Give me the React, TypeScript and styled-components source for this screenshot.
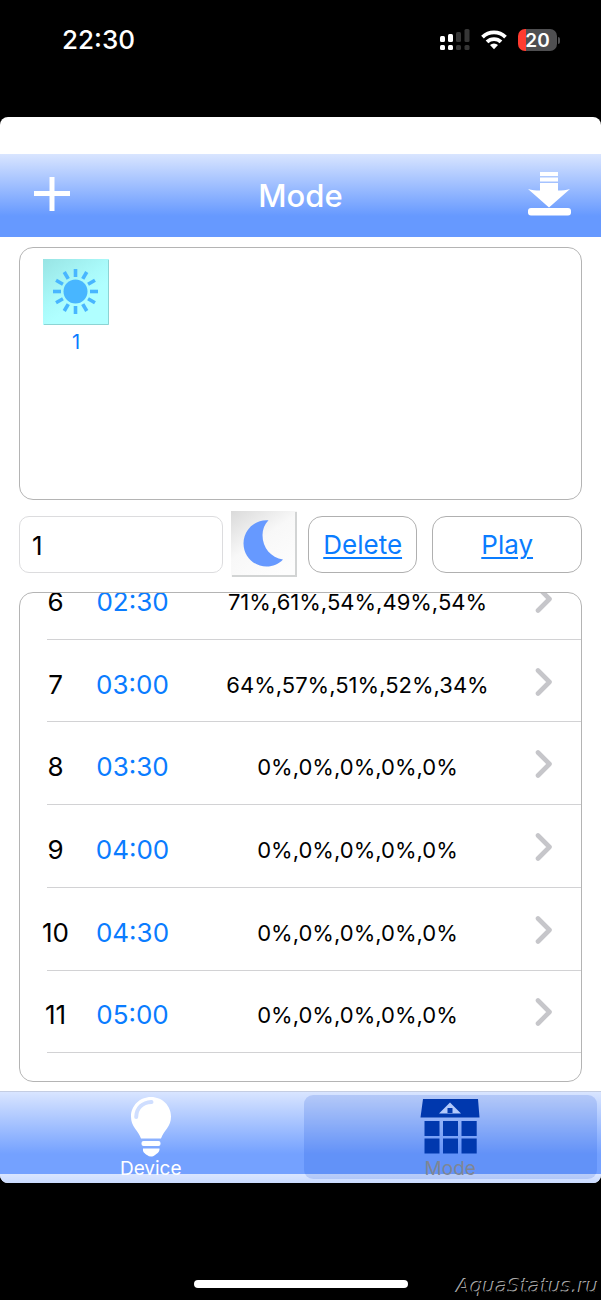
import React, { useState } from "react";
import styled, { createGlobalStyle } from "styled-components";

const BLUE = "#0a7cff";
const BAR_GRADIENT = "linear-gradient(#d9e5ff 0, #6699ff 62px, #6699ff 100%)";

const GlobalStyle = createGlobalStyle`
  *, *::before, *::after { box-sizing: border-box; }
  body { margin: 0; background: #000; }
  button, input { font: inherit; color: inherit; margin: 0; padding: 0; }
  button { background: none; border: 0; cursor: pointer; }
  svg { display: block; }
`;

const Page = styled.div`
  display: flex;
  flex-direction: column;
  height: 100vh;
  min-height: 900px;
  background: #000;
  font-family: Inter, "Liberation Sans", sans-serif;
  font-size: 26px;
  line-height: 32px;
`;

const StatusBar = styled.header`
  display: flex;
  justify-content: space-between;
  align-items: flex-start;
  flex: none;
  height: 117px;
  padding: 24px 41px 0 62px;
  color: #fff;
`;

const Clock = styled.time`
  font-weight: 500;
`;

const StatusIcons = styled.div`
  display: flex;
  align-items: center;
  gap: 11px;
  height: 32px;
`;

const Battery = styled.div`
  display: flex;
  align-items: center;
  gap: 1px;
`;

const BatteryBody = styled.div`
  width: 39px;
  height: 22px;
  border-radius: 7px;
  background: linear-gradient(90deg, #ff3b30 8px, #4f4f51 8px);
  font-size: 19px;
  font-weight: 600;
  line-height: 24px;
  text-align: center;
`;

const BatteryTip = styled.div`
  width: 2px;
  height: 7px;
  border-radius: 0 2px 2px 0;
  background: #4f4f51;
`;

const Sheet = styled.main`
  display: flex;
  flex-direction: column;
  flex: 1;
  min-height: 0;
  padding-top: 37px;
  border-radius: 8px;
  overflow: hidden;
  background: #fff;
`;

const TitleBar = styled.div`
  display: grid;
  grid-template-columns: 44px 1fr 44px;
  align-items: center;
  flex: none;
  height: 83px;
  padding: 0 30px;
  background: ${BAR_GRADIENT};
  color: #fff;
`;

const Title = styled.h1`
  margin: 0;
  font-size: 31px;
  line-height: 40px;
  font-weight: 500;
  text-align: center;
`;

const IconButton = styled.button`
  display: flex;
  justify-content: center;
`;

const TitleButton = styled(IconButton)`
  padding-bottom: 4px;
`;

const Content = styled.div`
  display: flex;
  flex-direction: column;
  flex: 1;
  min-height: 0;
  padding: 10px 19px 9px;
`;

const Panel = styled.section`
  border: 1px solid #b4b4b4;
  border-radius: 14px;
  overflow: hidden;
`;

const ModePanel = styled(Panel)`
  flex: none;
  height: 253px;
  padding: 11px 23px;
`;

const ModeItem = styled.button`
  display: flex;
  flex-direction: column;
  align-items: center;
  gap: 5px;
  color: ${BLUE};
  font-size: 20px;
  line-height: 24px;
`;

const Controls = styled.div`
  display: flex;
  align-items: center;
  flex: none;
  gap: 11px;
  height: 66px;
  margin: 11px 0 15px;
`;

const ControlGroup = styled.div<{ $gap: number; $share: number }>`
  display: flex;
  align-items: center;
  gap: ${(p) => p.$gap}px;
  flex: ${(p) => p.$share} 1 0;
  min-width: 0;
`;

const NameInput = styled.input`
  flex: 1;
  min-width: 0;
  height: 57px;
  padding: 2px 12px 0;
  border: 1px solid #dcdcde;
  border-radius: 10px;
  background: #fff;
  color: #000;
  outline: none;
`;

const ActionButton = styled.button<{ $share: number }>`
  flex: ${(p) => p.$share} 1 0;
  height: 57px;
  padding-top: 2px;
  border: 1px solid #b0b0b0;
  border-radius: 14px;
  color: ${BLUE};
  text-decoration: underline;
  text-decoration-thickness: 2px;
  text-underline-offset: 3px;
`;

const SchedulePanel = styled(Panel)`
  flex: 1;
  min-height: 0;
`;

const Schedule = styled.table`
  width: 100%;
  height: 579px;
  margin-top: -36px;
  border-collapse: collapse;
  table-layout: fixed;
`;

const Row = styled.tr`
  background: linear-gradient(#d2d2d4, #d2d2d4) right bottom / calc(100% - 27px) 1px no-repeat;
`;

const Cell = styled.td`
  padding: 7px 0 0;
  text-align: center;
`;

const NumberCell = styled(Cell)`
  width: 71px;
`;

const TimeCell = styled(Cell)`
  width: 118px;
  padding-right: 35px;
  color: ${BLUE};
`;

const LevelsCell = styled(Cell)`
  font-size: 22px;
  white-space: nowrap;
`;

const OpenCell = styled(Cell)`
  width: 75px;
  padding: 1px 0 0;
`;

const OpenButton = styled(IconButton)`
  width: 100%;
`;

const TabBar = styled.nav`
  display: grid;
  grid-template-columns: 1fr 1fr;
  gap: 6px;
  flex: none;
  height: 92px;
  padding: 3px 4px 4px;
  border-top: 1px solid #c4cde2;
  background: linear-gradient(#d9e5ff 0, #74a1ff 62px, #74a1ff 100%) 0 0 / 100% 82px;
`;

const Tab = styled.button<{ $active: boolean }>`
  display: flex;
  flex-direction: column;
  align-items: center;
  gap: 2px;
  padding-top: 2px;
  border-radius: 9px;
  background: ${(p) => (p.$active ? "rgba(0, 60, 210, 0.15)" : "none")};
  color: ${(p) => (p.$active ? "#7f8694" : "#fff")};
  font-size: 19px;
  line-height: 20px;
`;

const HomeArea = styled.footer`
  display: grid;
  grid-template-columns: 1fr 214px 1fr;
  align-items: end;
  flex: none;
  height: 117px;
`;

const HomeIndicator = styled.div`
  grid-column: 2;
  height: 8px;
  margin-bottom: 12px;
  border-radius: 4px;
  background: #fff;
`;

const Watermark = styled.span`
  justify-self: end;
  padding-right: 2px;
  color: #000;
  font-family: "DejaVu Sans", sans-serif;
  font-size: 20px;
  font-style: italic;
  line-height: 28px;
  text-shadow: -1px -1px 0 #a8a8a8;
`;

const SignalIcon = () => (
  <svg width="30" height="22" viewBox="0 0 30 22" aria-hidden="true">
    <g fill="#fff">
      <rect x="0" y="7" width="5" height="6" rx="1.5" />
      <rect x="8" y="5" width="5" height="8" rx="1.5" />
      <rect x="0" y="16" width="5" height="5" rx="1.5" />
      <rect x="8" y="16" width="5" height="5" rx="1.5" />
    </g>
    <g fill="#363636">
      <rect x="16" y="3" width="5" height="10" rx="1.5" />
      <rect x="24.5" y="0" width="5" height="13" rx="1.5" />
      <rect x="16" y="16" width="5" height="5" rx="1.5" />
      <rect x="24.5" y="16" width="5" height="5" rx="1.5" />
    </g>
  </svg>
);

const WifiIcon = () => (
  <svg width="26" height="20" viewBox="0 0 26 20" aria-hidden="true">
    <g fill="none" stroke="#fff" strokeWidth="3.8">
      <path d="M1.500 7.200a16.300 16.300 0 0 1 23 0" />
      <path d="M6 11.900a10 10 0 0 1 14 0" />
    </g>
    <path d="M13 19.200l-4-4.100a5.700 5.700 0 0 1 8 0z" fill="#fff" />
  </svg>
);

const PlusIcon = () => (
  <svg width="36" height="34" viewBox="0 0 36 34" aria-hidden="true">
    <path d="M0 16.500h36M18 0v34" stroke="#fff" strokeWidth="5" />
  </svg>
);

const DownloadIcon = () => (
  <svg width="44" height="44" viewBox="0 0 44 44" aria-hidden="true">
    <g fill="#fff">
      <path d="M13 0h18v4H13zM13 5.500h18v4H13zM13 11h18v7.500c4 0 8-.3 12-1.500L22 35.500 1 17c4 1.200 8 1.500 12 1.500z" />
      <rect x="1" y="36" width="43" height="7.500" rx="3" />
    </g>
  </svg>
);

const RAYS = Array.from({ length: 12 }, (_, i) => i * 30);

const SunTile = () => (
  <svg width="66" height="66" viewBox="0 0 66 66" aria-hidden="true">
    <defs>
      <linearGradient id="sunTile" x1="0" y1="0" x2="0.7" y2="1">
        <stop offset="0" stopColor="#98e4e4" />
        <stop offset="0.5" stopColor="#aafafa" />
        <stop offset="0.7" stopColor="#b0ffff" />
      </linearGradient>
    </defs>
    <rect width="66" height="66" fill="url(#sunTile)" />
    <path d="M1 65.500h64.500V1" fill="none" stroke="#8cd4d4" />
    <circle cx="32.500" cy="32.500" r="12" fill="#48b6ff" />
    {RAYS.map((angle) => (
      <rect
        key={angle}
        x="30.700"
        y="10"
        width="3.600"
        height="8"
        fill="#48b6ff"
        transform={`rotate(${angle} 32.500 32.500)`}
      />
    ))}
  </svg>
);

const MoonTile = () => (
  <svg width="66" height="66" viewBox="0 0 66 66" aria-hidden="true">
    <defs>
      <linearGradient id="moonTile" x1="0" y1="0" x2="0.7" y2="1">
        <stop offset="0" stopColor="#dadada" />
        <stop offset="0.5" stopColor="#f8f8f8" />
        <stop offset="1" stopColor="#fdfdfd" />
      </linearGradient>
    </defs>
    <rect width="66" height="66" fill="url(#moonTile)" />
    <path d="M1 65h64V1" fill="none" stroke="#d2d4d4" strokeWidth="2" />
    <path
      d="M37.500 9.300C24 8 12.500 19 12.500 32.500 12.500 45.500 23 55.500 35.500 55.500c6.500 0 12-2.300 16.500-7C40 46.500 31.500 37 31.500 24c0-5.500 2-10.500 6-14.700z"
      fill="#6699ff"
    />
  </svg>
);

const ChevronIcon = () => (
  <svg width="18" height="30" viewBox="0 0 18 30" aria-hidden="true">
    <path
      d="M3 3.500L14.500 15 3 26.500"
      fill="none"
      stroke="#c6c6ca"
      strokeWidth="4.600"
      strokeLinecap="round"
      strokeLinejoin="round"
    />
  </svg>
);

const BulbIcon = () => (
  <svg width="60" height="60" viewBox="0 0 60 60" aria-hidden="true">
    <g fill="#fff">
      <path d="M30 0c11.300 0 20 8.800 20 19.500 0 5-1.500 8.500-4 12-2.300 3.300-4.300 5.500-6 10H20c-1.700-4.500-3.700-6.700-6-10-2.500-3.500-4-7-4-12C10 8.800 18.700 0 30 0z" />
      <rect x="20.500" y="44" width="19" height="5" rx="2" />
      <path d="M22 51.500h16.500c.3 3.500-2.300 5-4.500 6.500-2.500 2-5.500 2-8 0-2.500-1.700-4.500-3-4-6.500z" />
    </g>
    <path d="M15.200 20C15.500 11 21.500 5.500 30.500 5" fill="none" stroke="#cfdeff" strokeWidth="4" strokeLinecap="round" />
  </svg>
);

const HouseIcon = () => (
  <svg width="60" height="60" viewBox="0 0 60 60" aria-hidden="true">
    <path
      d="M3 2h55l1.500 18.500H.5zM4.500 24h15v15h-15zM23 24h15v15H23zM41.500 24h15.200v15H41.500zM4.500 41.500h15v15h-15zM23 41.500h15v15H23zM41.500 41.500h15.200v15H41.500z"
      fill="#0038ae"
    />
    <path d="M30 5.500L41 16.500H19z" fill="#b3c9fb" />
    <rect x="27.500" y="11" width="5" height="5" fill="#0038ae" />
  </svg>
);

const ENTRIES = [
  { id: 6, time: "02:30", levels: [71, 61, 54, 49, 54] },
  { id: 7, time: "03:00", levels: [64, 57, 51, 52, 34] },
  { id: 8, time: "03:30", levels: [0, 0, 0, 0, 0] },
  { id: 9, time: "04:00", levels: [0, 0, 0, 0, 0] },
  { id: 10, time: "04:30", levels: [0, 0, 0, 0, 0] },
  { id: 11, time: "05:00", levels: [0, 0, 0, 0, 0] },
  { id: 12, time: "05:30", levels: [0, 0, 0, 0, 0] },
];

export default function App() {
  const [name, setName] = useState("1");
  const [tab, setTab] = useState<"device" | "mode">("mode");

  return (
    <>
      <GlobalStyle />
      <Page>
        <StatusBar>
          <Clock>22:30</Clock>
          <StatusIcons>
            <SignalIcon />
            <WifiIcon />
            <Battery>
              <BatteryBody>20</BatteryBody>
              <BatteryTip />
            </Battery>
          </StatusIcons>
        </StatusBar>

        <Sheet>
          <TitleBar>
            <TitleButton type="button" aria-label="Add">
              <PlusIcon />
            </TitleButton>
            <Title>Mode</Title>
            <TitleButton type="button" aria-label="Download">
              <DownloadIcon />
            </TitleButton>
          </TitleBar>

          <Content>
            <ModePanel>
              <ModeItem type="button">
                <SunTile />
                1
              </ModeItem>
            </ModePanel>

            <Controls>
              <ControlGroup $gap={8} $share={278}>
                <NameInput aria-label="Name" value={name} onChange={(e) => setName(e.target.value)} />
                <IconButton type="button" aria-label="Icon">
                  <MoonTile />
                </IconButton>
              </ControlGroup>
              <ControlGroup $gap={15} $share={274}>
                <ActionButton type="button" $share={109}>
                  Delete
                </ActionButton>
                <ActionButton type="button" $share={150}>
                  Play
                </ActionButton>
              </ControlGroup>
            </Controls>

            <SchedulePanel>
              <Schedule>
                <tbody>
                  {ENTRIES.map((entry) => (
                    <Row key={entry.id}>
                      <NumberCell>{entry.id}</NumberCell>
                      <TimeCell>{entry.time}</TimeCell>
                      <LevelsCell>{entry.levels.map((level) => `${level}%`).join(",")}</LevelsCell>
                      <OpenCell>
                        <OpenButton type="button" aria-label={`Open ${entry.time}`}>
                          <ChevronIcon />
                        </OpenButton>
                      </OpenCell>
                    </Row>
                  ))}
                </tbody>
              </Schedule>
            </SchedulePanel>
          </Content>

          <TabBar>
            <Tab type="button" $active={tab === "device"} onClick={() => setTab("device")}>
              <BulbIcon />
              Device
            </Tab>
            <Tab type="button" $active={tab === "mode"} onClick={() => setTab("mode")}>
              <HouseIcon />
              Mode
            </Tab>
          </TabBar>
        </Sheet>

        <HomeArea>
          <HomeIndicator />
          <Watermark>AquaStatus.ru</Watermark>
        </HomeArea>
      </Page>
    </>
  );
}
